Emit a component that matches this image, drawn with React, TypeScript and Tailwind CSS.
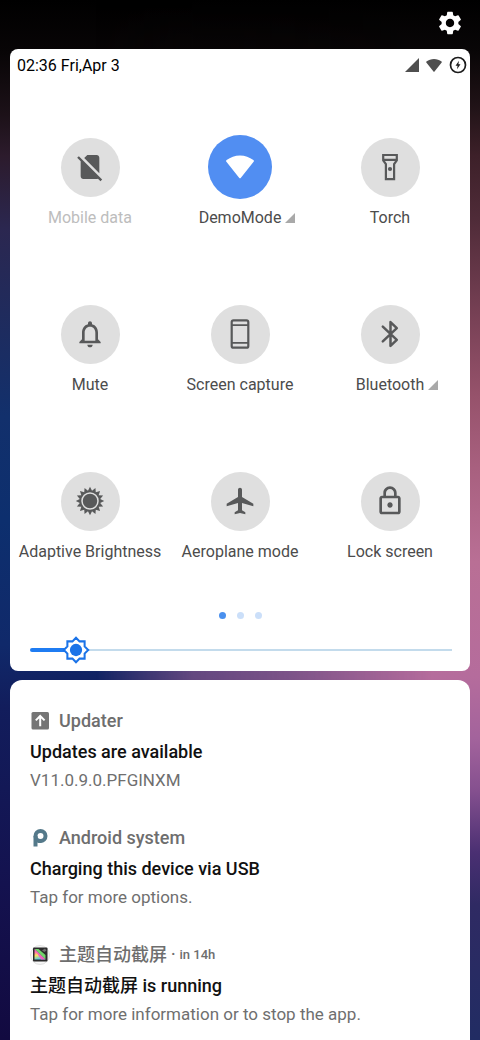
import { useState } from "react";
import type { ReactNode } from "react";
import clsx from "clsx";
import {
  MdAirplanemodeActive,
  MdOutlineLock,
  MdOutlineNotifications,
  MdSettings,
  MdSignalCellularNoSim,
} from "react-icons/md";

type Tile = {
  label: string;
  icon: ReactNode;
  active?: boolean;
  disabled?: boolean;
  expandable?: boolean;
};

type Notification = {
  app: string;
  icon: ReactNode;
  time?: string;
  title: string;
  text: string;
};

const starPoints = (count: number, outer: number, inner: number) =>
  Array.from({ length: count * 2 }, (_, i) => {
    const radius = i % 2 === 0 ? outer : inner;
    const angle = (Math.PI * i) / count - Math.PI / 2;
    return `${16 + radius * Math.cos(angle)},${16 + radius * Math.sin(angle)}`;
  }).join(" ");

const SignalTriangle = ({ className }: { className: string }) => (
  <svg viewBox="0 0 14 14" className={className} aria-hidden="true">
    <path d="M14 0v14H0z" fill="currentColor" />
  </svg>
);

const WifiFan = ({ className }: { className: string }) => (
  <svg viewBox="0 0 28 23" className={className} aria-hidden="true">
    <path
      d="M0.6 4.6C4.5 1.7 9 0 14 0s9.500 1.700 13.400 4.600c.6.500.7 1.100.2 1.700L14.900 22.300c-.5.700-1.300.7-1.800 0L.4 6.300C-.1 5.700 0 5.100.6 4.600z"
      fill="currentColor"
    />
  </svg>
);

const ChargingIcon = () => (
  <svg viewBox="0 0 18 18" className="size-[18px] text-[#1c1c1c]" aria-hidden="true">
    <circle cx="9" cy="9" r="7.500" fill="none" stroke="currentColor" strokeWidth="1.700" />
    <path d="M10 4.800 6.500 9.800h2.100L8 13.200l3.500-5H9.400z" fill="currentColor" />
  </svg>
);

const TorchIcon = () => (
  <svg viewBox="0 0 32 32" className="size-8" aria-hidden="true">
    <path
      d="M9.200 4h13.600v5.400l-2.700 3.600v15.200h-8.200V13L9.200 9.400zM9 8.800h14"
      fill="none"
      stroke="currentColor"
      strokeWidth="2.200"
    />
    <circle cx="16" cy="18" r="2.100" fill="currentColor" />
  </svg>
);

const PhoneIcon = () => (
  <svg viewBox="0 0 32 32" className="size-8" aria-hidden="true">
    <rect
      x="7.700"
      y="2.300"
      width="16.600"
      height="27.400"
      rx="1.800"
      fill="none"
      stroke="currentColor"
      strokeWidth="2.200"
    />
    <path d="M8 7.200h16M8 24.800h16" stroke="currentColor" strokeWidth="1.800" />
  </svg>
);

const BluetoothIcon = () => (
  <svg viewBox="0 0 32 32" className="size-8" aria-hidden="true">
    <path
      d="m8.800 8.600 14 13.200-6.300 6.100V4.100l6.300 6.100-14 13.200"
      fill="none"
      stroke="currentColor"
      strokeWidth="2.500"
      strokeLinecap="round"
      strokeLinejoin="round"
    />
  </svg>
);

const AdaptiveBrightnessIcon = () => (
  <svg viewBox="0 0 32 32" className="size-8" aria-hidden="true">
    <polygon points={starPoints(16, 14.2, 10.4)} fill="currentColor" />
    <circle cx="16" cy="16" r="8" fill="none" stroke="#dfdfdf" strokeWidth="1.500" />
  </svg>
);

const BrightnessThumb = () => (
  <svg viewBox="-1 -1 26 26" className="size-7" aria-hidden="true">
    <path
      d="M20 8.690V4h-4.690L12 .69 8.690 4H4v4.690L.69 12 4 15.310V20h4.690L12 23.310 15.310 20H20v-4.690L23.310 12z"
      fill="#ffffff"
      stroke="#1a73e8"
      strokeWidth="1.900"
    />
    <circle cx="12" cy="12" r="5.700" fill="#1a73e8" />
  </svg>
);

const UpdaterIcon = () => (
  <svg viewBox="0 0 20 20" className="size-5" aria-hidden="true">
    <rect x="1.500" y="1" width="17.500" height="17.500" rx="1.500" fill="#757575" />
    <path
      d="M10.200 15.200V5.400M5.800 9.400l4.400-4.400 4.400 4.400"
      fill="none"
      stroke="#ffffff"
      strokeWidth="2"
    />
  </svg>
);

const AndroidSystemIcon = () => (
  <svg viewBox="0 0 20 20" className="size-5" aria-hidden="true">
    <circle cx="10.500" cy="8" r="5" fill="none" stroke="#54798a" strokeWidth="4" />
    <rect x="3.500" y="8" width="4" height="10.500" fill="#54798a" />
    <path d="M7.500 11.500h4v3.400h-4z" fill="#54798a" />
  </svg>
);

const ScreenshotAppIcon = () => (
  <svg viewBox="0 0 20 20" className="size-5" aria-hidden="true">
    <defs>
      <linearGradient id="spectrum" x1="0" y1="0" x2="0.300" y2="1">
        <stop offset="0" stopColor="#e04fd0" />
        <stop offset="0.350" stopColor="#ff7fa0" />
        <stop offset="0.600" stopColor="#ffe45a" />
        <stop offset="1" stopColor="#4fc6e8" />
      </linearGradient>
    </defs>
    <circle cx="10" cy="10" r="9.500" fill="#f7f7f7" stroke="#d6d6d6" strokeWidth="0.700" />
    <rect x="3" y="2.500" width="14.500" height="14" rx="1" fill="#2b2b2b" />
    <path d="M4.500 4 15.500 14.500h-11z" fill="url(#spectrum)" />
    <path d="M4.500 4h4l7 6v4.500z" fill="#6fd46a" />
    <path d="m4.500 4 11 10.500H11z" fill="#f05fc0" />
    <path d="m12 5.500 3-2 1.500 2-2 1.500z" fill="#6f6f6f" />
  </svg>
);

const tiles: Tile[] = [
  { label: "Mobile data", icon: <MdSignalCellularNoSim size={32} />, disabled: true },
  {
    label: "DemoMode",
    icon: <WifiFan className="h-6 w-7" />,
    active: true,
    expandable: true,
  },
  { label: "Torch", icon: <TorchIcon /> },
  { label: "Mute", icon: <MdOutlineNotifications size={32} /> },
  { label: "Screen capture", icon: <PhoneIcon /> },
  { label: "Bluetooth", icon: <BluetoothIcon />, expandable: true },
  { label: "Adaptive Brightness", icon: <AdaptiveBrightnessIcon /> },
  { label: "Aeroplane mode", icon: <MdAirplanemodeActive size={32} /> },
  { label: "Lock screen", icon: <MdOutlineLock size={32} /> },
];

const notifications: Notification[] = [
  {
    app: "Updater",
    icon: <UpdaterIcon />,
    title: "Updates are available",
    text: "V11.0.9.0.PFGINXM",
  },
  {
    app: "Android system",
    icon: <AndroidSystemIcon />,
    title: "Charging this device via USB",
    text: "Tap for more options.",
  },
  {
    app: "主题自动截屏",
    icon: <ScreenshotAppIcon />,
    time: "in 14h",
    title: "主题自动截屏 is running",
    text: "Tap for more information or to stop the app.",
  },
];

const QuickTile = ({ label, icon, active, disabled, expandable }: Tile) => (
  <button
    type="button"
    disabled={disabled}
    aria-pressed={!!active}
    className="flex flex-col items-center gap-[7px]"
  >
    <span className="flex size-16 items-center justify-center">
      <span
        className={clsx(
          "flex items-center justify-center rounded-full",
          active ? "size-16 bg-[#518ef2] text-white" : "size-[59px] bg-[#dfdfdf] text-[#58595a]",
        )}
      >
        {icon}
      </span>
    </span>
    <span
      className={clsx(
        "flex items-center whitespace-nowrap text-base leading-6",
        disabled ? "text-[#bdbdbd]" : "text-[#4c4c4c]",
      )}
    >
      {label}
      {expandable && <SignalTriangle className="-mr-3.5 ml-1 size-2.5 text-[#a9a9a9]" />}
    </span>
  </button>
);

const BrightnessSlider = () => {
  const [value, setValue] = useState(11);

  return (
    <div className="relative flex h-7 items-center">
      <div
        className="-mr-3.5 h-1 shrink-0 rounded-full bg-[#1f7cf2]"
        style={{ width: `${value}%` }}
      />
      <div className="z-10 shrink-0">
        <BrightnessThumb />
      </div>
      <div className="-ml-3.5 h-0.5 flex-1 bg-[#c3dbec]" />
      <input
        type="range"
        aria-label="Brightness"
        min={0}
        max={100}
        value={value}
        onChange={(e) => setValue(Number(e.target.value))}
        className="absolute inset-0 z-20 w-full cursor-pointer opacity-0"
      />
    </div>
  );
};

const NotificationItem = ({ app, icon, time, title, text }: Notification) => (
  <li>
    <div className="flex h-6 items-center text-[#6e6e6e]">
      {icon}
      <span className="ml-[9px] text-lg font-medium leading-6">{app}</span>
      {time && (
        <>
          <span className="mx-1 text-base font-medium">·</span>
          <span className="text-[13px] font-medium">{time}</span>
        </>
      )}
    </div>
    <h2 className="mt-[7px] text-lg font-medium leading-6 text-[#111111]">{title}</h2>
    <p className="mt-1 text-[17px] leading-6 text-[#6f6f6f]">{text}</p>
  </li>
);

const Wallpaper = () => (
  <div
    aria-hidden="true"
    className="absolute inset-0 -z-10 bg-[linear-gradient(to_bottom,#000_0%,#080506_5%,#1c1118_11%,#2c1b2c_15%,#2b2750_22%,#12306c_40%,#0d2f6e_50%,#10296a_62%,#121d5c_68%,#14124f_85%,#120a40_100%)]"
  >
    <div className="size-full bg-[linear-gradient(to_bottom,#000_0%,#090607_5%,#1f1216_10%,#3d2029_15%,#4f2b38_21%,#7a4257_31%,#96526b_38%,#a8607f_45%,#b96f95_54%,#b56c9c_65%,#a3639c_71%,#85508f_76%,#4a2f72_82%,#2f2a63_87%,#212c63_100%)] [mask-image:linear-gradient(to_right,transparent_20%,#00000080_40%,#000000a6_60%,#000_90%)]" />
  </div>
);

export default function App() {
  return (
    <div className="relative isolate flex min-h-screen flex-col px-2.5 font-[Roboto,'Noto_Sans_CJK_SC',sans-serif]">
      <Wallpaper />
      <header className="flex h-[49px] items-center justify-end px-1.5 pb-1">
        <button type="button" aria-label="Settings" className="text-white">
          <MdSettings size={28} />
        </button>
      </header>

      <main className="flex flex-1 flex-col gap-[9px]">
        <section aria-label="Quick settings" className="rounded-lg bg-white pb-[7px]">
          <div className="flex h-[34px] items-center justify-between pl-[7px] pr-[3px]">
            <time className="text-base text-black">02:36 Fri,Apr 3</time>
            <div className="flex items-center gap-[7px] pb-0.5 text-[#4f4f4f]">
              <SignalTriangle className="size-3.5" />
              <WifiFan className="h-[13px] w-4" />
              <ChargingIcon />
            </div>
          </div>

          <div className="grid grid-cols-3 gap-y-[72px] px-[5px] pt-[52px]">
            {tiles.map((tile) => (
              <QuickTile key={tile.label} {...tile} />
            ))}
          </div>

          <div className="mt-12 flex justify-center gap-[11px]">
            <span className="size-[7px] rounded-full bg-[#4a90ee]" />
            <span className="size-[7px] rounded-full bg-[#cbdff9]" />
            <span className="size-[7px] rounded-full bg-[#cbdff9]" />
          </div>

          <div className="mt-[17px] pl-5 pr-[18px]">
            <BrightnessSlider />
          </div>
        </section>

        <section
          aria-label="Notifications"
          className="flex-1 rounded-t-xl bg-white px-5 pb-3 pt-[29px]"
        >
          <ul className="flex flex-col gap-[34px]">
            {notifications.map((item) => (
              <NotificationItem key={item.title} {...item} />
            ))}
          </ul>
        </section>
      </main>
    </div>
  );
}
